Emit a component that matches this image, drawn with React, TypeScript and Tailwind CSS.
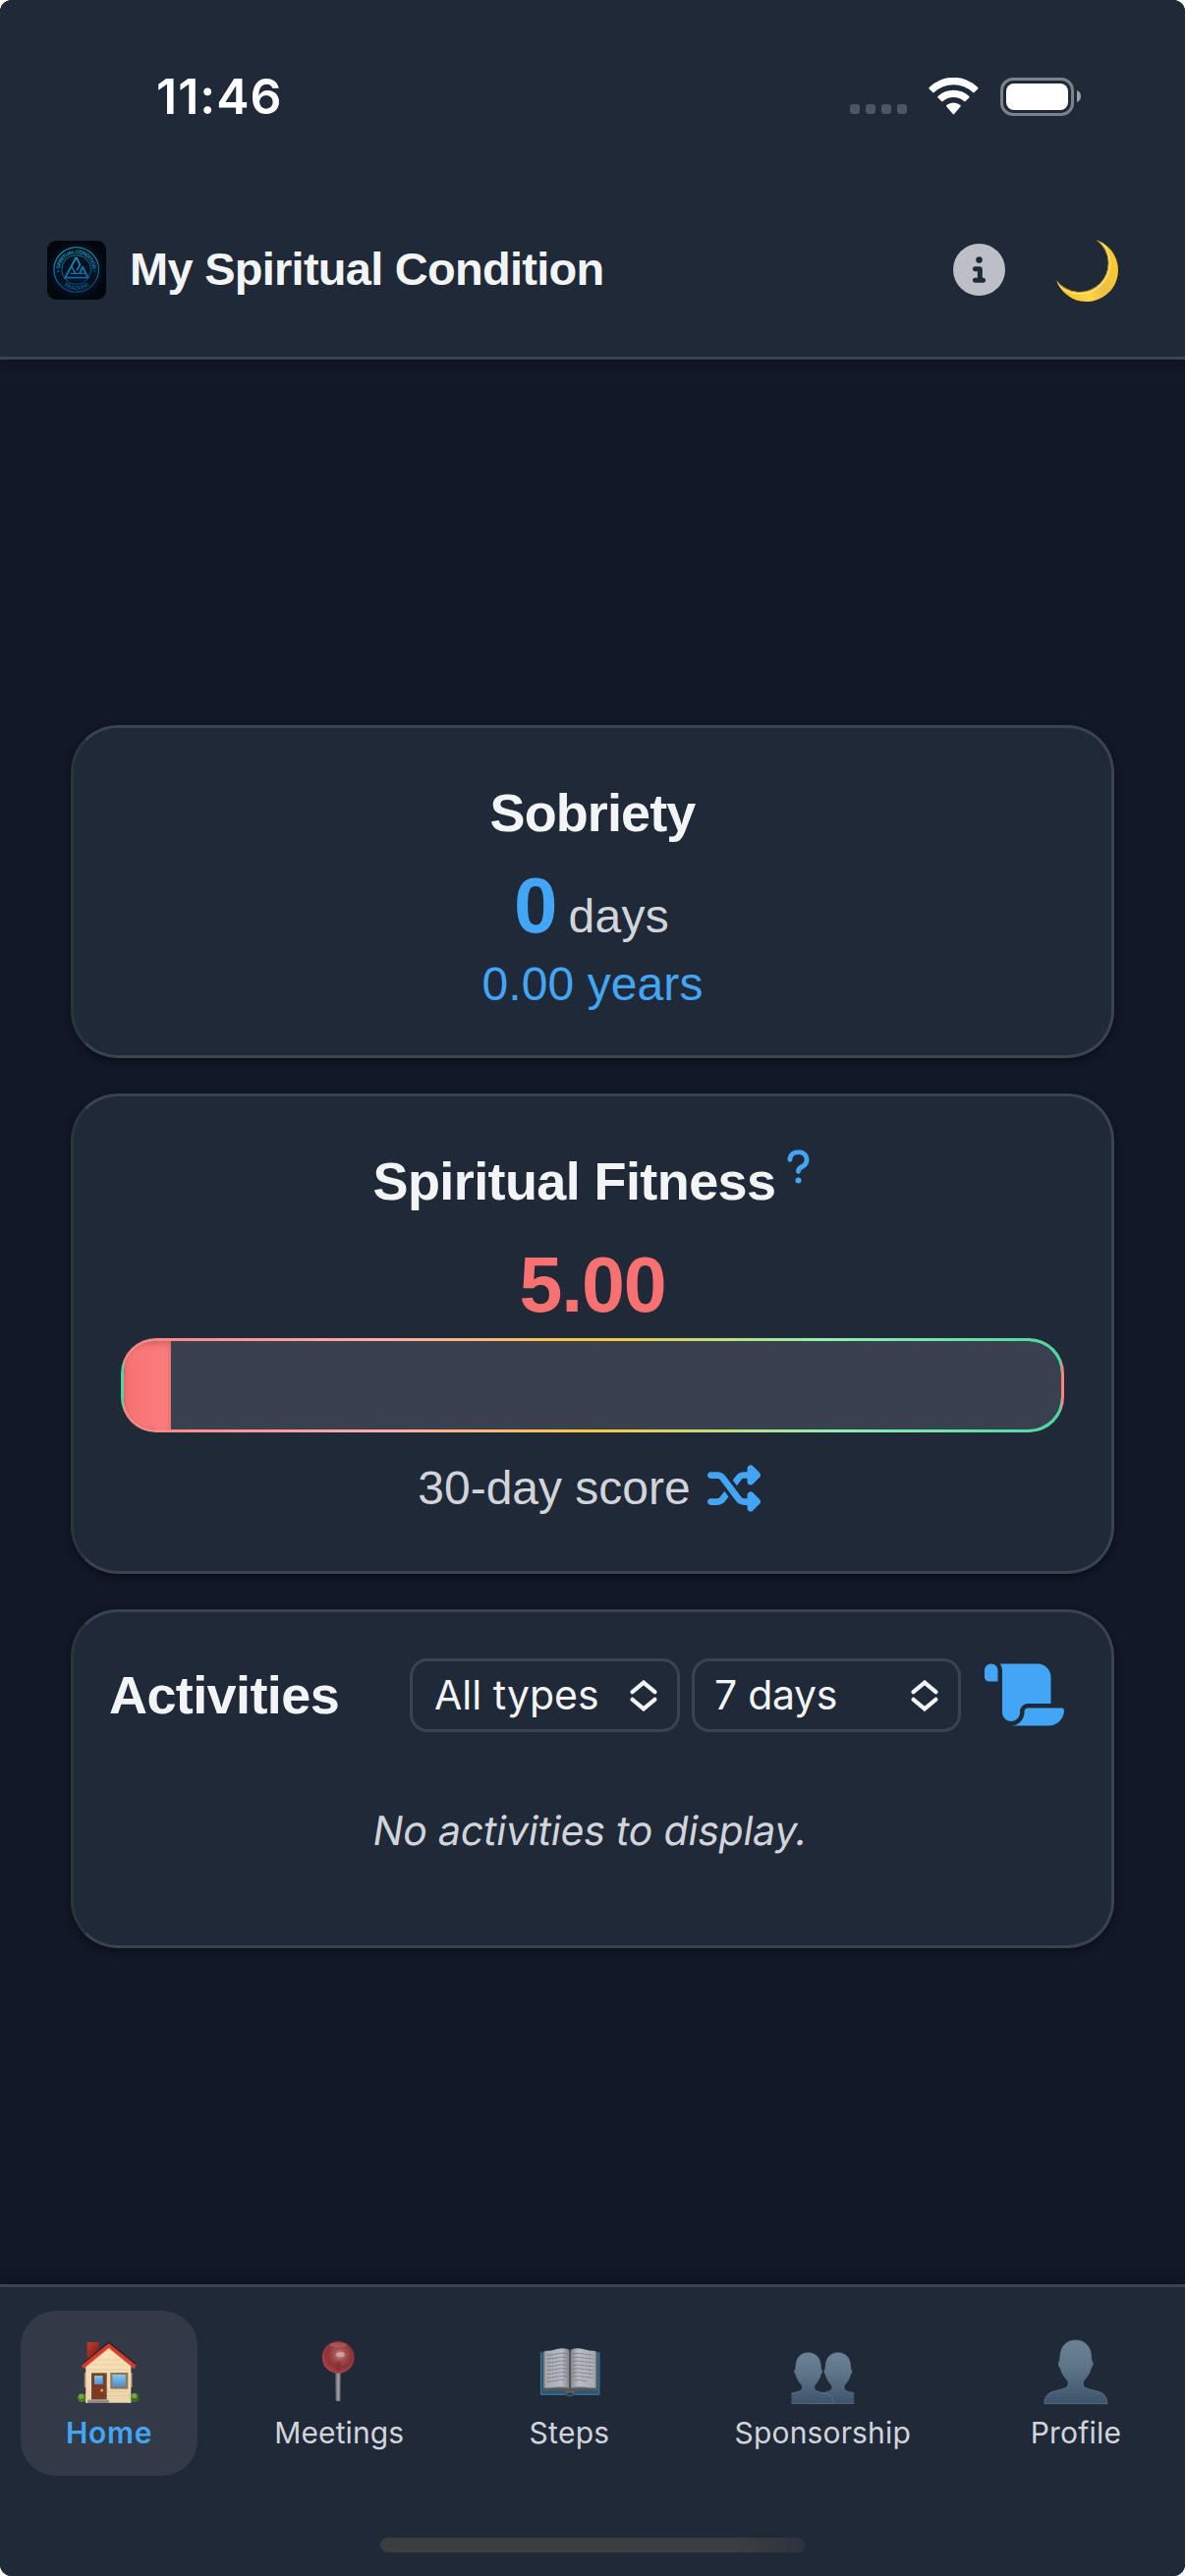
import React from "react";
import { FaCircleInfo, FaQuestion, FaScroll, FaShuffle } from "react-icons/fa6";

const HEAD =
  "M31.7 0C41 0 47 6 47.5 16L48 21C50 22 49.5 26 47.5 28C46 34 43.5 37 40.5 40.5C38.5 43 39 47 42 48.5C47 51 55 51 59.5 54.5C62.5 57 63.8 60.5 64 64.7H-.3C0 60.5 1 57 4 54.5C8.5 51 16.5 51 21.5 48.5C24.5 47 25 43 23 40.5C20 37 17.5 34 16 28C14 26 13.5 22 15.5 21L16 16C16.5 6 22.5 0 31.7 0Z";

function Logo() {
  return (
    <svg viewBox="0 0 60 60" className="size-[60px] rounded-[9px]">
      <defs>
        <radialGradient id="logoBg">
          <stop offset="0" stopColor="#01101f" />
          <stop offset=".7" stopColor="#021323" />
          <stop offset="1" stopColor="#02070e" />
        </radialGradient>
        <linearGradient id="logoInk" gradientUnits="userSpaceOnUse" x1="22" y1="5" x2="34" y2="54">
          <stop offset="0" stopColor="#17a5b0" />
          <stop offset=".5" stopColor="#0f7cb4" />
          <stop offset="1" stopColor="#0a4487" />
        </linearGradient>
        <path id="arcTop" d="M13.2 29.5a16.5 16.5 0 0 1 33 0" />
        <path id="arcBottom" d="M9 29.5a20.7 20.7 0 0 0 41.4 0" />
      </defs>
      <rect width="60" height="60" fill="url(#logoBg)" />
      <g fill="none" stroke="url(#logoInk)">
        <circle cx="29.7" cy="29.5" r="22.8" strokeWidth="1.1" />
        <circle cx="29.7" cy="29.5" r="14.9" strokeWidth=".8" />
        <path d="M29.7 16.8 18.2 37.6H41.6L36.2 26.6 33 33.4M29.7 16.8 33.4 24.4 30.2 30.4" strokeWidth="1.8" strokeLinejoin="round" />
        <path d="M23.4 33.4H38.6M25 26.6 28.8 33.4" strokeWidth="1.4" />
      </g>
      <g fill="url(#logoInk)" fontFamily="Liberation Sans, sans-serif" fontWeight="700" fontSize="5.4">
        <text textAnchor="middle"><textPath href="#arcTop" startOffset="50%" textLength="50">SPIRITUAL CONDITION</textPath></text>
        <text textAnchor="middle" fontSize="5.8"><textPath href="#arcBottom" startOffset="50%">TRACKER</textPath></text>
      </g>
      <circle cx="11.2" cy="31" r="1.1" fill="#0f6a94" />
      <circle cx="48.2" cy="31" r="1.1" fill="#0b4a80" />
    </svg>
  );
}

function Moon() {
  return (
    <svg viewBox="0 0 65 65" className="size-[65px] overflow-visible">
      <defs>
        <linearGradient id="moonFill" x1="0" y1=".6" x2="1" y2=".4">
          <stop offset="0" stopColor="#fbc420" />
          <stop offset=".45" stopColor="#fdd447" />
          <stop offset=".7" stopColor="#ecc046" />
          <stop offset="1" stopColor="#fdc92c" />
        </linearGradient>
        <clipPath id="moonClip"><path d="M41 .4A32.2 32.2 0 1 1 .3 41.4A29.2 29.2 0 1 0 41 .4Z" /></clipPath>
      </defs>
      <path d="M41 .4A32.2 32.2 0 1 1 .3 41.4A29.2 29.2 0 1 0 41 .4Z" fill="url(#moonFill)" />
      <g clipPath="url(#moonClip)" fill="none">
        <path d="M41 .4A29.2 29.2 0 1 1 .3 41.4" stroke="#fff07a" strokeWidth="5" opacity=".7" />
        <path d="M41 .4A29.2 29.2 0 1 1 .3 41.4" stroke="#9a5a0c" strokeWidth="1.4" opacity=".7" />
      </g>
    </svg>
  );
}

function House() {
  return (
    <svg viewBox="0 0 64 64" className="size-16 overflow-visible">
      <defs>
        <linearGradient id="wall" x1="0" y1="0" x2="0" y2="1">
          <stop offset="0" stopColor="#fbe3b8" />
          <stop offset="1" stopColor="#ead4ab" />
        </linearGradient>
        <linearGradient id="chimney" x1="0" y1="0" x2="1" y2="1">
          <stop offset="0" stopColor="#c93a2c" />
          <stop offset="1" stopColor="#6a1d19" />
        </linearGradient>
        <linearGradient id="pane" x1="0" y1="0" x2="0" y2="1">
          <stop offset="0" stopColor="#83c8ea" />
          <stop offset="1" stopColor="#5090cf" />
        </linearGradient>
      </defs>
      <rect x="9.7" y="2" width="12.2" height="16" fill="url(#chimney)" />
      <rect x="6.8" y="33" width="2" height="15" fill="#a88a68" />
      <rect x="54" y="33" width="1.6" height="15" fill="#a88a68" />
      <path d="M8.3 63.7V23L31.7 6 54.3 23V63.7Z" fill="url(#wall)" />
      <path d="M20 20H43M14 25H50M9 30H54M9 52.5H54M9 56.5H54" stroke="#e3c592" strokeWidth=".6" />
      <path d="M31.7 5.5 5.5 27M31.7 5.5 58.3 27" stroke="#c9a070" strokeWidth="5" opacity=".6" />
      <path d="M4.2 25.8 31.7 2.8 59.6 25.8" fill="none" stroke="#23201f" strokeWidth="2.4" />
      <path d="M4.8 27.2 31.7 5.4 58.8 27.2" fill="none" stroke="#d83a2f" strokeWidth="3.7" />
      <rect x="14" y="33.3" width="15.7" height="27.5" fill="#6d4a37" />
      <rect x="15.2" y="34.6" width="12" height="26" fill="#7f3a22" />
      <rect x="17" y="36" width="8.7" height="9" fill="url(#pane)" />
      <circle cx="24.7" cy="51" r="1.5" fill="#e5b14b" />
      <rect x="33.3" y="33" width="18" height="16.6" fill="#8e765c" />
      <rect x="35.4" y="35" width="13.4" height="12" fill="url(#pane)" />
      <circle cx="4.3" cy="58.6" r="4.4" fill="#4f7f2b" />
      <circle cx="3.6" cy="57.2" r="2.4" fill="#7aa63e" />
      <circle cx="57.9" cy="58.4" r="4.6" fill="#3f6b23" />
      <circle cx="57.6" cy="56.6" r="2.6" fill="#7aa63e" />
      <rect x="8.3" y="54" width="2.2" height="9.7" fill="#ead4ab" />
      <rect x="52" y="54" width="2.3" height="9.7" fill="#e4cda4" />
      <rect x="10.3" y="60.8" width="21.4" height="3.2" fill="#8f8378" />
      <rect x="11.5" y="60.4" width="19" height="1.2" fill="#b3a89c" />
    </svg>
  );
}

function Pin() {
  return (
    <svg viewBox="0 0 64 64" className="size-16">
      <defs>
        <radialGradient id="ball" cx=".55" cy=".42" r=".6">
          <stop offset="0" stopColor="#c9908c" />
          <stop offset=".3" stopColor="#a4504f" />
          <stop offset=".65" stopColor="#8c3238" />
          <stop offset="1" stopColor="#a8434b" />
        </radialGradient>
        <linearGradient id="needle">
          <stop offset="0" stopColor="#555a60" />
          <stop offset=".55" stopColor="#a3a2a3" />
          <stop offset="1" stopColor="#54545a" />
        </linearGradient>
      </defs>
      <path d="M28.1 31H33.9L33.4 61.4Q30.9 62.8 28.6 61.4Z" fill="url(#needle)" />
      <circle cx="31.2" cy="17.4" r="16.4" fill="url(#ball)" />
      <ellipse cx="31" cy="5" rx="9" ry="2.6" fill="#b6656a" opacity=".6" />
      <ellipse cx="33.5" cy="14.5" rx="4.6" ry="2.6" fill="#d3aaa8" opacity=".75" />
      <path d="M28.5 22H34L33.2 31.5H29.4Z" fill="#7d2d36" opacity=".6" />
    </svg>
  );
}

function Book() {
  const lines = [0, 1, 2, 3, 4, 5, 6, 7];
  return (
    <svg viewBox="0 0 64 64" className="size-16">
      <defs>
        <linearGradient id="leaf">
          <stop offset="0" stopColor="#a3a6ad" />
          <stop offset=".7" stopColor="#b9bbc2" />
          <stop offset="1" stopColor="#85878d" />
        </linearGradient>
        <linearGradient id="leafRight">
          <stop offset="0" stopColor="#8a8c92" />
          <stop offset=".3" stopColor="#b9bbc2" />
          <stop offset="1" stopColor="#a9abb2" />
        </linearGradient>
      </defs>
      <path d="M2 12.3H62.2V55.7H37Q35 57.4 32 57.4T27 55.7H2Z" fill="#2c5672" />
      <path d="M2.5 12.5V55.2H27M61.8 12.5V55.2H37" fill="none" stroke="#437b99" strokeWidth="1" />
      <path d="M5 11.5V51.5Q20 49 28 52.6H36Q44 49 59.4 51.5V11.5Z" fill="#77797d" />
      <path d="M5 48.5V51.8Q20 49.6 28 52.8H36Q44 49.6 59.4 51.8V48.5Z" fill="#55575b" />
      <path d="M6.5 11Q13 11 19 9T31 9.6V48.8Q25 46.5 19 47.6T6.5 48.6Z" fill="url(#leaf)" />
      <path d="M57.7 11Q51.5 11 45.5 9T33.2 9.6V48.8Q39 46.5 45.5 47.6T57.7 48.6Z" fill="url(#leafRight)" />
      <path d="M32.1 9.6V50" stroke="#4b4d52" strokeWidth="1.6" />
      {lines.map((i) => (
        <g key={i} stroke="#6d7078" strokeWidth=".8" fill="none" strokeDasharray="4 .7 2.5 .6">
          <path d={`M8.6 ${15.2 + i * 3.85}Q15 ${15 + i * 3.85} 20 ${13.8 + i * 3.85}T${i === 7 ? 26 : 29.6} ${14.2 + i * 3.85}`} />
          <path d={`M${i === 7 ? 37 : 34.6} ${14.2 + i * 3.85}Q39 ${13 + i * 3.85} 44 ${13.8 + i * 3.85}T${i === 7 ? 50 : 56} ${15.2 + i * 3.85}`} />
        </g>
      ))}
      <path d="M27.5 52.8H36.5Q34.5 55 32 55T27.5 52.8Z" fill="#8a7440" />
      <path d="M29 53.4H35Q34 55.6 32 55.6T29 53.4Z" fill="#16324a" />
    </svg>
  );
}

function PeopleDefs() {
  return (
    <defs>
      <linearGradient id="bust" x1="0" y1="0" x2="0" y2="1">
        <stop offset="0" stopColor="#6c8396" />
        <stop offset=".4" stopColor="#5f7588" />
        <stop offset="1" stopColor="#3e546b" />
      </linearGradient>
      <clipPath id="pairClip"><rect x=".5" y="0" width="63.7" height="65" /></clipPath>
    </defs>
  );
}

function People() {
  return (
    <svg viewBox="0 0 64 64" className="size-16 overflow-visible">
      <PeopleDefs />
      <g clipPath="url(#pairClip)">
        <path d={HEAD} transform="translate(22.5 12.7) scale(.8)" fill="url(#bust)" stroke="#5f7f93" strokeWidth=".8" />
        <path d={HEAD} transform="translate(-7.8 12.7) scale(.8)" fill="url(#bust)" stroke="#5f7f93" strokeWidth=".8" />
      </g>
    </svg>
  );
}

function Person() {
  return (
    <svg viewBox="0 0 64 64" className="size-16 overflow-visible">
      <PeopleDefs />
      <path d={HEAD} fill="url(#bust)" stroke="#5f7f93" strokeWidth=".6" />
    </svg>
  );
}

function StatusBar() {
  return (
    <div className="flex h-[196px] items-center justify-between pl-[159px] pr-[106px]">
      <span className="font-['Inter',sans-serif] text-[50px] leading-[50px] font-semibold tracking-[1px] text-white">11:46</span>
      <div className="flex items-center">
        <div className="mt-[26px] mr-[22px] flex gap-1.5">
          {[0, 1, 2, 3].map((i) => (
            <span key={i} className="size-2.5 rounded-[3px] bg-[#4d5560]" />
          ))}
        </div>
        <svg viewBox="0 0 51 38" className="mr-[22px] h-[38px] w-[51px]" fill="#fff">
          <path d="M.6 11.4Q-.1 10.7.6 9.9A35.5 35.5 0 0 1 50.2 9.9Q50.9 10.7 50.2 11.4L46.6 15.1Q45.9 15.8 45.1 15.1A28.6 28.6 0 0 0 5.7 15.1Q4.9 15.8 4.2 15.1Z" />
          <path d="M9.5 20.4Q8.8 19.7 9.5 19A23.3 23.3 0 0 1 41.3 19Q42 19.7 41.3 20.4L37.6 24.1Q36.9 24.8 36.1 24.1A16 16 0 0 0 14.7 24.1Q13.9 24.8 13.2 24.1Z" />
          <path d="M18.3 29.4Q17.6 28.7 18.4 28A11 11 0 0 1 32.4 28Q33.2 28.7 32.5 29.4L26.1 36.9Q25.4 37.6 24.7 36.9Z" />
        </svg>
        <div className="h-[39px] w-[75px] rounded-[13px] border-[3px] border-[#7c8289] p-[3px]">
          <div className="h-full rounded-[8px] bg-white" />
        </div>
        <svg viewBox="0 0 4 12" className="ml-[3px] h-3 w-1" fill="#9da1a7">
          <path d="M0 0Q4 1.5 4 6T0 12Z" />
        </svg>
      </div>
    </div>
  );
}

function Card({ children, className }: { children: React.ReactNode; className: string }) {
  return (
    <section
      className={`rounded-[48px] border-[3px] border-[#3a4350] border-l-[#2a343f] bg-[#202937] shadow-[0_3px_9px_rgba(0,0,0,0.45)] ${className}`}
    >
      {children}
    </section>
  );
}

function Select({ label, className, text }: { label: string; className: string; text: string }) {
  return (
    <div className={`flex h-[75px] items-center justify-between rounded-[18px] border-[3px] border-[#3a4350] px-5 ${className}`}>
      <span className={`mt-[-1px] font-['Inter',sans-serif] text-[41px] leading-[50px] text-[#f3f4f6] ${text}`}>{label}</span>
      <svg viewBox="0 0 28 32" className="h-8 w-7" fill="none" stroke="#f3f4f6" strokeWidth="4.2" strokeLinecap="round" strokeLinejoin="miter">
        <path d="M2.6 12.2 14 2.6 25.4 12.2M2.6 19.8 14 29.4 25.4 19.8" />
      </svg>
    </div>
  );
}

const TITLE = "font-['Liberation_Sans',Arial,sans-serif] text-[54px] leading-[54px] font-bold text-[#f3f4f6]";

const NAV = [
  { label: "Home", icon: <House />, box: "w-[180px] rounded-[36px] bg-[#313a46]", text: "font-semibold tracking-[0.7px] text-[#42a5f5]" },
  { label: "Meetings", icon: <Pin />, box: "w-[180px]", text: "tracking-[0.1px] text-[#d1d5db]" },
  { label: "Steps", icon: <Book />, box: "w-[180px]", text: "tracking-[0.3px] text-[#d1d5db]" },
  { label: "Sponsorship", icon: <People />, box: "w-[227px]", text: "tracking-[0.15px] text-[#d1d5db]" },
  { label: "Profile", icon: <Person />, box: "w-[180px]", text: "tracking-[0.2px] text-[#d1d5db]" },
];

export default function App() {
  return (
    <div className="h-[2622px] w-[1206px] bg-white">
      <div className="flex h-full flex-col overflow-hidden rounded-[12px] bg-[#111827] font-['Liberation_Sans',Arial,sans-serif]">
        <header className="h-[366px] shrink-0 border-b-[3px] border-[#3a4350] bg-[#202937] shadow-[0_3px_9px_rgba(0,0,0,0.3)]">
          <StatusBar />
          <div className="flex h-[158px] items-center pr-[66px] pl-12">
            <Logo />
            <h1 className="mt-[-3px] ml-[24px] text-[47px] leading-[54px] font-bold tracking-[-0.74px] text-[#f3f4f6]">
              My Spiritual Condition
            </h1>
            <FaCircleInfo className="mt-[-2px] ml-auto size-[53px] text-[#bcc0c6]" />
            <div className="mt-[2px] ml-[52px]">
              <Moon />
            </div>
          </div>
        </header>

        <main className="flex flex-1 flex-col gap-9 px-[72px] pt-[372px]">
          <Card className="flex h-[339px] flex-col items-center pt-[59px]">
            <h2 className={`${TITLE} tracking-[-0.9px]`}>Sobriety</h2>
            <div className="mt-[28px] flex items-baseline gap-[11px] pr-[2px]">
              <span className="text-[80px] leading-[80px] font-bold text-[#42a5f5]">0</span>
              <span className="text-[48px] leading-[48px] tracking-[0.3px] text-[#d1d5db]">days</span>
            </div>
            <div className="mt-4 text-[48px] leading-[48px] tracking-[0.1px] text-[#42a5f5]">0.00 years</div>
          </Card>

          <Card className="flex h-[489px] flex-col items-center px-12 pt-[59px]">
            <div className="flex items-start gap-[11px] pr-[1px]">
              <h2 className={`${TITLE} tracking-[-0.6px]`}>Spiritual Fitness</h2>
              <FaQuestion className="mt-[-7px] h-[39px] w-[25px] text-[#42a5f5]" />
            </div>
            <div className="mt-[39px] text-[79px] leading-[80px] font-bold tracking-[-1.2px] text-[#f87171]">5.00</div>
            <div className="mt-[14px] h-24 w-full shrink-0 overflow-hidden rounded-[36px] border-[3px] border-transparent bg-[linear-gradient(90deg,#fb8383_0%,#fdabab_27%,#fbc83c_50%,#92f0b0_75%,#4fd6a2_100%)]">
              <div className="h-full overflow-hidden rounded-[33px] bg-[#394150]">
                <div
                  className="h-full bg-[linear-gradient(90deg,#f87272,#fa7e7c)] shadow-[inset_0_3px_6px_rgba(120,40,40,0.3)]"
                  style={{ width: "5%" }}
                />
              </div>
            </div>
            <div className="mt-[30px] flex items-center gap-[17px] pr-[7px]">
              <span className="mt-[-1px] text-[48px] leading-[54px] text-[#d1d5db]">30-day score</span>
              <FaShuffle className="size-[54px] text-[#42a5f5]" />
            </div>
          </Card>

          <Card className="h-[345px] pt-[47px]">
            <div className="flex h-[75px] items-center pr-12 pl-9">
              <h2 className={`${TITLE} mt-[-2px] tracking-[-0.6px]`}>Activities</h2>
              <Select label="All types" className="ml-auto w-[275px]" text="pl-[2px]" />
              <Select label="7 days" className="ml-3 w-[274px]" text="tracking-[-0.3px]" />
              <FaScroll className="mt-[-2px] ml-6 h-[72px] w-[81px] text-[#42a5f5]" />
            </div>
            <p className="mt-[76px] -skew-x-[9deg] pr-1 text-center font-['Inter',sans-serif] text-[41px] leading-[48px] tracking-[-0.2px] text-[#d1d5db]">
              No activities to display.
            </p>
          </Card>
        </main>

        <nav className="flex h-[297px] shrink-0 flex-col border-t-[3px] border-[#3a4350] bg-[#202937] px-[21px] pt-6 shadow-[0_-3px_12px_rgba(0,0,0,0.3)]">
          <div className="flex justify-between">
            {NAV.map((item) => (
              <div key={item.label} className={`flex h-[168px] flex-col items-center pt-[30px] ${item.box}`}>
                {item.icon}
                <span className={`mt-3 font-['Inter',sans-serif] text-[30px] leading-[36px] ${item.text}`}>{item.label}</span>
              </div>
            ))}
          </div>
          <div className="mt-[63px] h-[15px] w-[432px] self-center rounded-full bg-[linear-gradient(90deg,#3b3d3f,#3b3d40_85%,#2c333d)]" />
        </nav>
      </div>
    </div>
  );
}
